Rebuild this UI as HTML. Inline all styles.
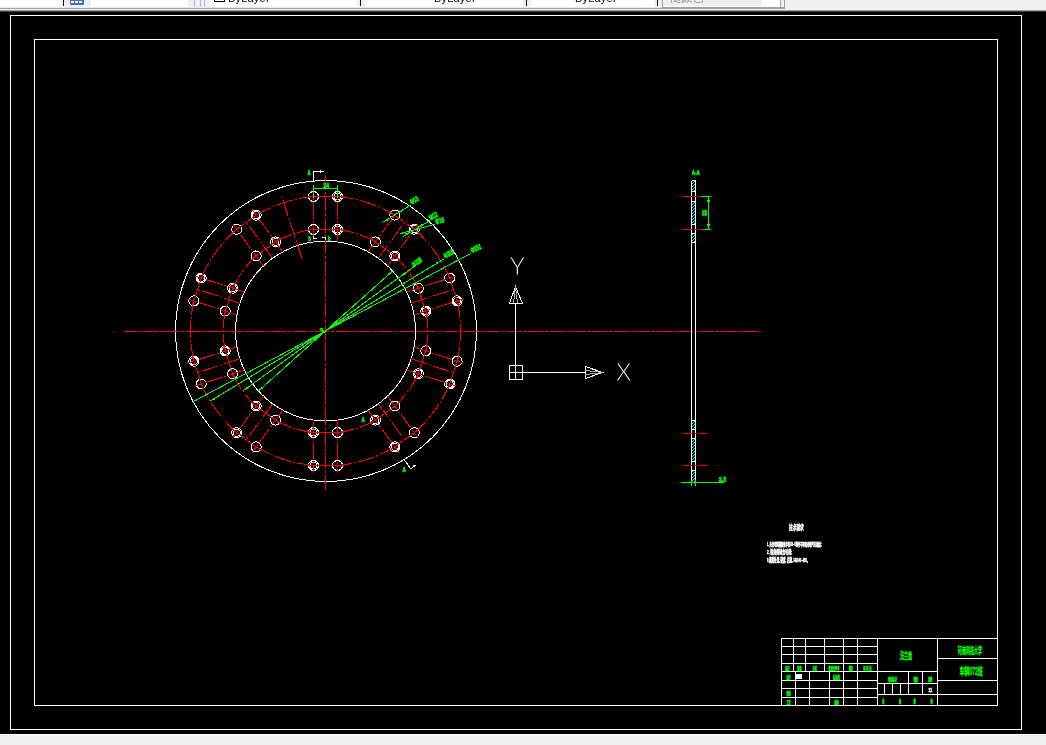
<!DOCTYPE html>
<html lang="zh"><head><meta charset="utf-8"><title>CAD - 顶轮盘</title>
<style>
html,body{margin:0;padding:0;background:#000;}
body{width:1046px;height:745px;overflow:hidden;position:relative;font-family:"Liberation Sans","Noto Sans CJK SC",sans-serif;}
#tb{will-change:transform;position:absolute;left:0;top:0;width:1046px;height:12px;background:#f0f0f0;overflow:hidden;}
#tb .bar{position:absolute;left:0;top:0;width:785px;height:9px;background:#fff;}
#tb div{position:absolute;}
#tb .gap{top:0;height:7px;background:#eef0f4;}
#tb .vl{top:0;height:6px;width:1px;background:#111;}
#tb .gl{top:0;height:7px;width:1px;background:#b4b8c0;}
#tb .txt{top:-9.5px;font-size:11px;line-height:14px;color:#000;white-space:nowrap;letter-spacing:0.2px}
#tb .l7{left:0;top:7px;width:662px;height:1px;background:#e3e9f2;}
#tb .l8{left:0;top:8px;width:785px;height:1px;background:#a0a0a0;}
#tb .l9{left:0;top:9px;width:1046px;height:1px;background:#f2f2f2;}
#tb .l10{left:0;top:10px;width:1046px;height:1px;background:#a0a0a0;}
#tb .l11{left:0;top:11px;width:1046px;height:1px;background:#3c3c3c;}
#bot{position:absolute;left:0;top:734px;width:1046px;height:11px;background:#f0f0f0;border-top:1px solid #fff;box-sizing:border-box;}
svg{position:absolute;left:0;top:0;will-change:transform;}
.w{stroke:#fff;stroke-width:1;fill:none;}
.w2{stroke:#fff;stroke-width:2;fill:none;}
.wthin{stroke:#aaa;stroke-width:1;fill:none;}
.wf{fill:#fff;stroke:none;}
.r{stroke:#f00;stroke-width:1;fill:none;}
.cl{stroke-dasharray:15 2 3 1.4;}
.bc{stroke-dasharray:17 2 2 2;}
.hl{stroke-dasharray:17 2 2 2;}
.g{stroke:#0f0;stroke-width:1;fill:none;}
.gf{fill:#0f0;stroke:none;}
text{font-family:"Liberation Sans","Noto Sans CJK SC",sans-serif;stroke:none;}
.gt{fill:#0f0;font-size:7.5px;font-weight:bold;stroke:#0f0;stroke-width:0.6px;}
.mid{text-anchor:middle;}
.ucs{fill:#fff;font-size:25px;text-anchor:middle;font-family:"Liberation Sans",sans-serif;stroke:#000;stroke-width:1.1px;}
.wt{fill:#fff;font-weight:bold;stroke:#fff;stroke-width:0.5px;}
.tg{fill:#0f0;font-weight:bold;stroke:#0f0;stroke-width:0.5px;}
.t5{font-size:5px}.t55{font-size:4.8px}.t56{font-size:5.6px}.t6{font-size:6px}.t7{font-size:7px}.t9{font-size:9px}.t10{font-size:10px}
</style></head>
<body>
<div id="tb">
  <div class="bar"></div>
  <div class="gap" style="left:60px;width:31px;background:#f0f0f0"></div>
  <div class="vl" style="left:63px"></div>
  <div style="left:70px;top:0;width:14px;height:5px;background:#4b6ea3;border-radius:0 0 1px 1px"></div>
  <div style="left:71px;top:1px;width:3px;height:2px;background:#e8eef8"></div>
  <div style="left:75px;top:1px;width:3px;height:2px;background:#e8eef8"></div>
  <div style="left:79px;top:1px;width:3px;height:2px;background:#e8eef8"></div>
  <div class="gap" style="left:188px;width:21px"></div>
  <div class="gl" style="left:194px"></div><div class="gl" style="left:200px"></div><div class="gl" style="left:204px"></div>
  <div style="left:214px;top:-9px;width:9px;height:9px;border:1px solid #000"></div>
  <div class="txt" style="left:228px">ByLayer</div>
  <div class="gap" style="left:357px;width:8px"></div><div class="vl" style="left:360px"></div>
  <div class="txt" style="left:434px">ByLayer</div>
  <div class="gap" style="left:523px;width:8px"></div><div class="vl" style="left:526px"></div>
  <div class="txt" style="left:575px">ByLayer</div>
  <div class="gap" style="left:654px;width:8px"></div><div class="vl" style="left:657px"></div>
  <div style="left:662px;top:0;width:1px;height:8px;background:#a0a0a0"></div>
  <div style="left:663px;top:0;width:99px;height:6px;background:#f0f0f0"></div>
  <div class="txt" style="left:670px;color:#8a8a8a;top:-9px">随颜色</div>
  <div style="left:662px;top:7px;width:123px;height:1px;background:#a0a0a0"></div>
  <div style="left:780px;top:0;width:1px;height:8px;background:#a0a0a0"></div>
  <div style="left:781px;top:0;width:3px;height:7px;background:#f0f0f0"></div>
  <div style="left:784px;top:0;width:1px;height:9px;background:#a0a0a0"></div>
  <div class="l7"></div><div class="l8"></div><div class="l9"></div><div class="l10"></div><div class="l11"></div>
</div>
<svg width="1046" height="745" viewBox="0 0 1046 745" shape-rendering="crispEdges">
<defs>
<pattern id="hat" width="3" height="3" patternUnits="userSpaceOnUse">
<rect width="3" height="3" fill="#000"/>
<path d="M-0.5,3.5 L3.5,-0.5" stroke="#0ff" stroke-width="1"/>
</pattern>
<clipPath id="cv"><rect x="0" y="12" width="1046" height="722"/></clipPath>
</defs>
<g clip-path="url(#cv)">
<rect x="10.5" y="15.5" width="1011" height="714" class="w"/>
<rect x="34.5" y="39.5" width="963" height="666" class="w"/>
<ellipse cx="326" cy="331" rx="150.5" ry="150.5" class="w"/>
<circle cx="325.5" cy="331" r="90" class="w"/>
<circle cx="313.5" cy="196.5" r="5" class="w"/>
<circle cx="337.5" cy="196.5" r="5" class="w"/>
<circle cx="337.5" cy="196.5" r="3.5" class="w"/>
<circle cx="313.5" cy="229.5" r="5" class="w"/>
<circle cx="337.5" cy="229.5" r="5" class="w"/>
<circle cx="337.5" cy="229.5" r="3.5" class="w"/>
<circle cx="394.85" cy="215.13" r="5" class="w"/>
<circle cx="414.27" cy="229.24" r="5" class="w"/>
<circle cx="414.27" cy="229.24" r="3.5" class="w"/>
<circle cx="375.45" cy="241.83" r="5" class="w"/>
<circle cx="394.87" cy="255.94" r="5" class="w"/>
<circle cx="394.87" cy="255.94" r="3.5" class="w"/>
<circle cx="449.71" cy="278.02" r="5" class="w"/>
<circle cx="457.13" cy="300.85" r="5" class="w"/>
<circle cx="457.13" cy="300.85" r="3.5" class="w"/>
<circle cx="418.32" cy="288.22" r="5" class="w"/>
<circle cx="425.74" cy="311.05" r="5" class="w"/>
<circle cx="425.74" cy="311.05" r="3.5" class="w"/>
<circle cx="457.13" cy="361.15" r="5" class="w"/>
<circle cx="449.71" cy="383.98" r="5" class="w"/>
<circle cx="449.71" cy="383.98" r="3.5" class="w"/>
<circle cx="425.74" cy="350.95" r="5" class="w"/>
<circle cx="418.32" cy="373.78" r="5" class="w"/>
<circle cx="418.32" cy="373.78" r="3.5" class="w"/>
<circle cx="414.27" cy="432.76" r="5" class="w"/>
<circle cx="394.85" cy="446.87" r="5" class="w"/>
<circle cx="394.85" cy="446.87" r="3.5" class="w"/>
<circle cx="394.87" cy="406.06" r="5" class="w"/>
<circle cx="375.45" cy="420.17" r="5" class="w"/>
<circle cx="375.45" cy="420.17" r="3.5" class="w"/>
<circle cx="337.5" cy="465.5" r="5" class="w"/>
<circle cx="313.5" cy="465.5" r="5" class="w"/>
<circle cx="313.5" cy="465.5" r="3.5" class="w"/>
<circle cx="337.5" cy="432.5" r="5" class="w"/>
<circle cx="313.5" cy="432.5" r="5" class="w"/>
<circle cx="313.5" cy="432.5" r="3.5" class="w"/>
<circle cx="256.15" cy="446.87" r="5" class="w"/>
<circle cx="236.73" cy="432.76" r="5" class="w"/>
<circle cx="236.73" cy="432.76" r="3.5" class="w"/>
<circle cx="275.55" cy="420.17" r="5" class="w"/>
<circle cx="256.13" cy="406.06" r="5" class="w"/>
<circle cx="256.13" cy="406.06" r="3.5" class="w"/>
<circle cx="201.29" cy="383.98" r="5" class="w"/>
<circle cx="193.87" cy="361.15" r="5" class="w"/>
<circle cx="193.87" cy="361.15" r="3.5" class="w"/>
<circle cx="232.68" cy="373.78" r="5" class="w"/>
<circle cx="225.26" cy="350.95" r="5" class="w"/>
<circle cx="225.26" cy="350.95" r="3.5" class="w"/>
<circle cx="193.87" cy="300.85" r="5" class="w"/>
<circle cx="201.29" cy="278.02" r="5" class="w"/>
<circle cx="201.29" cy="278.02" r="3.5" class="w"/>
<circle cx="225.26" cy="311.05" r="5" class="w"/>
<circle cx="232.68" cy="288.22" r="5" class="w"/>
<circle cx="232.68" cy="288.22" r="3.5" class="w"/>
<circle cx="236.73" cy="229.24" r="5" class="w"/>
<circle cx="256.15" cy="215.13" r="5" class="w"/>
<circle cx="256.15" cy="215.13" r="3.5" class="w"/>
<circle cx="256.13" cy="255.94" r="5" class="w"/>
<circle cx="275.55" cy="241.83" r="5" class="w"/>
<circle cx="275.55" cy="241.83" r="3.5" class="w"/>
<line x1="313.5" y1="241.5" x2="337.5" y2="241.5" class="w"/>
<line x1="124" y1="331.5" x2="761" y2="331.5" class="r cl" stroke-dashoffset="2.5"/>
<line x1="325.5" y1="175" x2="325.5" y2="490" class="r cl"/>
<path d="M337.5,196.5 A135.03,135.03 0 0 1 394.85,215.13" class="r bc"/>
<path d="M414.27,229.24 A135.03,135.03 0 0 1 449.71,278.02" class="r bc"/>
<path d="M457.13,300.85 A135.03,135.03 0 0 1 457.13,361.15" class="r bc"/>
<path d="M449.71,383.98 A135.03,135.03 0 0 1 414.27,432.76" class="r bc"/>
<path d="M394.85,446.87 A135.03,135.03 0 0 1 337.5,465.5" class="r bc"/>
<path d="M313.5,465.5 A135.03,135.03 0 0 1 256.15,446.87" class="r bc"/>
<path d="M236.73,432.76 A135.03,135.03 0 0 1 201.29,383.98" class="r bc"/>
<path d="M193.87,361.15 A135.03,135.03 0 0 1 193.87,300.85" class="r bc"/>
<path d="M201.29,278.02 A135.03,135.03 0 0 1 236.73,229.24" class="r bc"/>
<path d="M256.15,215.13 A135.03,135.03 0 0 1 313.5,196.5" class="r bc"/>
<path d="M337.5,229.5 A102.21,102.21 0 0 1 375.45,241.83" class="r bc"/>
<path d="M394.87,255.94 A102.21,102.21 0 0 1 418.32,288.22" class="r bc"/>
<path d="M425.74,311.05 A102.21,102.21 0 0 1 425.74,350.95" class="r bc"/>
<path d="M418.32,373.78 A102.21,102.21 0 0 1 394.87,406.06" class="r bc"/>
<path d="M375.45,420.17 A102.21,102.21 0 0 1 337.5,432.5" class="r bc"/>
<path d="M313.5,432.5 A102.21,102.21 0 0 1 275.55,420.17" class="r bc"/>
<path d="M256.13,406.06 A102.21,102.21 0 0 1 232.68,373.78" class="r bc"/>
<path d="M225.26,350.95 A102.21,102.21 0 0 1 225.26,311.05" class="r bc"/>
<path d="M232.68,288.22 A102.21,102.21 0 0 1 256.13,255.94" class="r bc"/>
<path d="M275.55,241.83 A102.21,102.21 0 0 1 313.5,229.5" class="r bc"/>
<line x1="313.5" y1="241.8" x2="313.5" y2="189.5" class="r hl"/>
<line x1="337.5" y1="241.8" x2="337.5" y2="189.5" class="r hl"/>
<line x1="307.5" y1="196.5" x2="343.5" y2="196.5" class="r"/>
<line x1="307.5" y1="229.5" x2="343.5" y2="229.5" class="r"/>
<line x1="368.22" y1="251.79" x2="398.96" y2="209.47" class="r hl"/>
<line x1="387.64" y1="265.89" x2="418.38" y2="223.58" class="r hl"/>
<line x1="378.4" y1="258.19" x2="404.97" y2="221.62" class="r hl"/>
<line x1="389.99" y1="211.61" x2="419.12" y2="232.77" class="r"/>
<line x1="370.6" y1="238.3" x2="399.72" y2="259.46" class="r"/>
<line x1="406.62" y1="292.02" x2="456.37" y2="275.86" class="r hl"/>
<line x1="414.04" y1="314.85" x2="463.78" y2="298.69" class="r hl"/>
<line x1="411.1" y1="303.19" x2="454.08" y2="289.22" class="r hl"/>
<line x1="447.85" y1="272.32" x2="458.98" y2="306.56" class="r"/>
<line x1="416.47" y1="282.52" x2="427.59" y2="316.75" class="r"/>
<line x1="414.04" y1="347.15" x2="463.78" y2="363.31" class="r hl"/>
<line x1="406.62" y1="369.98" x2="456.37" y2="386.14" class="r hl"/>
<line x1="411.1" y1="358.81" x2="454.08" y2="372.78" class="r hl"/>
<line x1="458.98" y1="355.44" x2="447.85" y2="389.68" class="r"/>
<line x1="427.59" y1="345.25" x2="416.47" y2="379.48" class="r"/>
<line x1="387.64" y1="396.11" x2="418.38" y2="438.42" class="r hl"/>
<line x1="368.22" y1="410.21" x2="398.96" y2="452.53" class="r hl"/>
<line x1="378.4" y1="403.81" x2="404.97" y2="440.38" class="r hl"/>
<line x1="419.12" y1="429.23" x2="389.99" y2="450.39" class="r"/>
<line x1="399.72" y1="402.54" x2="370.6" y2="423.7" class="r"/>
<line x1="337.5" y1="420.2" x2="337.5" y2="472.5" class="r hl"/>
<line x1="313.5" y1="420.2" x2="313.5" y2="472.5" class="r hl"/>
<line x1="343.5" y1="465.5" x2="307.5" y2="465.5" class="r"/>
<line x1="343.5" y1="432.5" x2="307.5" y2="432.5" class="r"/>
<line x1="282.78" y1="410.21" x2="252.04" y2="452.53" class="r hl"/>
<line x1="263.36" y1="396.11" x2="232.62" y2="438.42" class="r hl"/>
<line x1="272.6" y1="403.81" x2="246.03" y2="440.38" class="r hl"/>
<line x1="261.01" y1="450.39" x2="231.88" y2="429.23" class="r"/>
<line x1="280.4" y1="423.7" x2="251.28" y2="402.54" class="r"/>
<line x1="244.38" y1="369.98" x2="194.63" y2="386.14" class="r hl"/>
<line x1="236.96" y1="347.15" x2="187.22" y2="363.31" class="r hl"/>
<line x1="239.9" y1="358.81" x2="196.92" y2="372.78" class="r hl"/>
<line x1="203.15" y1="389.68" x2="192.02" y2="355.44" class="r"/>
<line x1="234.53" y1="379.48" x2="223.41" y2="345.25" class="r"/>
<line x1="236.96" y1="314.85" x2="187.22" y2="298.69" class="r hl"/>
<line x1="244.38" y1="292.02" x2="194.63" y2="275.86" class="r hl"/>
<line x1="239.9" y1="303.19" x2="196.92" y2="289.22" class="r hl"/>
<line x1="192.02" y1="306.56" x2="203.15" y2="272.32" class="r"/>
<line x1="223.41" y1="316.75" x2="234.53" y2="282.52" class="r"/>
<line x1="263.36" y1="265.89" x2="232.62" y2="223.58" class="r hl"/>
<line x1="282.78" y1="251.79" x2="252.04" y2="209.47" class="r hl"/>
<line x1="272.6" y1="258.19" x2="246.03" y2="221.62" class="r hl"/>
<line x1="231.88" y1="232.77" x2="261.01" y2="211.61" class="r"/>
<line x1="251.28" y1="259.46" x2="280.4" y2="238.3" class="r"/>
<line x1="302.32" y1="259.67" x2="281" y2="194.05" class="r hl"/>
<line x1="193.18" y1="401.65" x2="471.05" y2="253.28" class="g"/>
<polygon points="457.82,260.35 453.88,263.59 452.94,261.82" class="gf"/>
<polygon points="193.18,401.65 197.12,398.41 198.06,400.18" class="gf"/>
<text transform="translate(472.22 253.34) rotate(-28.1) scale(0.58 1)" class="gt">Φ352</text>
<line x1="209.98" y1="401.24" x2="444.27" y2="258.79" class="g"/>
<polygon points="441.02,260.76 437.27,264.21 436.23,262.5" class="gf"/>
<polygon points="209.98,401.24 213.73,397.79 214.77,399.5" class="gf"/>
<text transform="translate(445.44 258.78) rotate(-31.3) scale(0.58 1)" class="gt">Φ318</text>
<line x1="243.22" y1="390.78" x2="416.11" y2="265.17" class="g"/>
<polygon points="407.78,271.22 404.32,274.97 403.14,273.35" class="gf"/>
<polygon points="243.22,390.78 246.68,387.03 247.86,388.65" class="gf"/>
<text transform="translate(414.04 267.42) rotate(-36) scale(0.58 1)" class="gt">Φ238</text>
<line x1="258.41" y1="390.99" x2="392.59" y2="271.01" class="g"/>
<polygon points="392.59,271.01 389.53,275.09 388.2,273.6" class="gf"/>
<polygon points="258.41,390.99 261.47,386.91 262.8,388.4" class="gf"/>
<text transform="translate(322.5 333.5) rotate(-35) scale(0.6 1)" class="gt">R</text>
<line x1="382.3" y1="222.6" x2="410.9" y2="204.9" class="g"/>
<text transform="translate(411.75 204.77) rotate(-31.75) scale(0.62 1)" class="gt">Φ13</text>
<line x1="403.2" y1="236.6" x2="429.8" y2="220.6" class="g"/>
<text transform="translate(430.66 220.48) rotate(-31.03) scale(0.62 1)" class="gt">M12</text>
<line x1="400" y1="233.7" x2="435" y2="224.2" class="g"/>
<text transform="translate(435.97 224.34) rotate(-15.19) scale(0.62 1)" class="gt">Φ10</text>
<polygon points="390.75,217.63 387.03,221.12 385.97,219.42" class="gf"/>
<polygon points="398.95,212.63 402.67,209.15 403.73,210.85" class="gf"/>
<polygon points="410.17,231.74 406.5,235.34 405.26,233.29" class="gf"/>
<polygon points="418.37,226.74 422.03,223.14 423.27,225.19" class="gf"/>
<line x1="313.5" y1="185" x2="313.5" y2="198" class="g"/>
<line x1="337.5" y1="185" x2="337.5" y2="198" class="g"/>
<line x1="313.5" y1="188.5" x2="337.5" y2="188.5" class="g"/>
<polygon points="314,188.5 318,187.5 318,189.5" class="gf"/>
<polygon points="337,188.5 333,189.5 333,187.5" class="gf"/>
<text transform="translate(326.2 187.8) scale(0.7 1)" class="gt mid">24</text>
<polyline points="313.5,181 313.5,171.5 323.5,171.5" class="w"/>
<polygon points="317.5,171.5 320.5,170.1 320.5,172.9" class="wf"/>
<text transform="translate(307.6 175.3) scale(0.6 1)" class="gt">A</text>
<polyline points="404.14,459.65 410.72,468.71 416.38,464.6" class="w"/>
<polygon points="416.38,464.6 414.31,467.7 412.79,465.6" class="wf"/>
<text transform="translate(402.4 472.3) scale(0.6 1)" class="gt">A</text>
<text transform="translate(361.6 421.6) scale(0.6 1)" class="gt">A</text>
<polyline points="313.5,236 313.5,238.5 317,238.5" class="w"/>
<polyline points="322,237 325.5,237 325.5,240" class="w"/>
<text transform="translate(308.6 241.2) scale(0.6 1)" class="gt">b</text>
<text transform="translate(327.8 240.6) scale(0.6 1)" class="gt">b</text>
<rect x="509.5" y="365.5" width="13" height="14" class="w"/>
<line x1="509.5" y1="372.5" x2="522.5" y2="372.5" class="w"/>
<line x1="515.5" y1="365.5" x2="515.5" y2="379.5" class="w"/>
<line x1="515.5" y1="365.5" x2="515.5" y2="303.5" class="w"/>
<line x1="522.5" y1="372.5" x2="585.5" y2="372.5" class="w"/>
<polygon points="509.5,303.5 522.5,303.5 515.5,286.5" class="w"/>
<polyline points="513.5,303.5 515.5,286.5 517.5,303.5" class="wthin"/>
<polygon points="585.5,366.5 585.5,378.5 602.5,372.5" class="w"/>
<polyline points="585.5,370.5 602.5,372.5 585.5,374.5" class="wthin"/>
<text transform="translate(517.4 274.6)" class="ucs">Y</text>
<text transform="translate(623.6 381.4)" class="ucs">X</text>
<line x1="691.5" y1="180.5" x2="691.5" y2="482.5" class="w"/>
<line x1="695.5" y1="180.5" x2="695.5" y2="482.5" class="w"/>
<line x1="691.5" y1="180.5" x2="695.5" y2="180.5" class="w"/>
<line x1="691.5" y1="482.5" x2="695.5" y2="482.5" class="w"/>
<rect x="692" y="180.5" width="3" height="11" fill="url(#hat)" stroke="none"/>
<line x1="691.5" y1="180.5" x2="695.5" y2="180.5" class="w"/>
<line x1="691.5" y1="191.5" x2="695.5" y2="191.5" class="w"/>
<rect x="692" y="201.5" width="3" height="23" fill="url(#hat)" stroke="none"/>
<line x1="691.5" y1="201.5" x2="695.5" y2="201.5" class="w"/>
<line x1="691.5" y1="224.5" x2="695.5" y2="224.5" class="w"/>
<rect x="692" y="233.5" width="3" height="9" fill="url(#hat)" stroke="none"/>
<line x1="691.5" y1="233.5" x2="695.5" y2="233.5" class="w"/>
<line x1="691.5" y1="242.5" x2="695.5" y2="242.5" class="w"/>
<rect x="692" y="420.5" width="3" height="9" fill="url(#hat)" stroke="none"/>
<line x1="691.5" y1="420.5" x2="695.5" y2="420.5" class="w"/>
<line x1="691.5" y1="429.5" x2="695.5" y2="429.5" class="w"/>
<rect x="692" y="438.5" width="3" height="23" fill="url(#hat)" stroke="none"/>
<line x1="691.5" y1="438.5" x2="695.5" y2="438.5" class="w"/>
<line x1="691.5" y1="461.5" x2="695.5" y2="461.5" class="w"/>
<rect x="692" y="470.5" width="3" height="12" fill="url(#hat)" stroke="none"/>
<line x1="691.5" y1="470.5" x2="695.5" y2="470.5" class="w"/>
<line x1="691.5" y1="482.5" x2="695.5" y2="482.5" class="w"/>
<line x1="683" y1="196.5" x2="701" y2="196.5" class="r" stroke-dasharray="9 2 3 2"/>
<line x1="683" y1="229.5" x2="703" y2="229.5" class="r" stroke-dasharray="9 2 3 2"/>
<line x1="683" y1="433.5" x2="707" y2="433.5" class="r" stroke-dasharray="9 2 3 2"/>
<line x1="683" y1="465.5" x2="708" y2="465.5" class="r" stroke-dasharray="9 2 3 2"/>
<line x1="701" y1="196.5" x2="711" y2="196.5" class="g"/>
<line x1="703" y1="229.5" x2="711" y2="229.5" class="g"/>
<line x1="708.5" y1="196.5" x2="708.5" y2="229.5" class="g"/>
<polygon points="708.5,197 710.1,202 706.9,202" class="gf"/>
<polygon points="708.5,229 706.9,224 710.1,224" class="gf"/>
<text transform="translate(707.2 213) rotate(-90) scale(0.7 1)" class="gt mid">33</text>
<text transform="translate(695.7 175.4) scale(0.6 1)" class="gt mid">A-A</text>
<line x1="681" y1="482.5" x2="724" y2="482.5" class="g"/>
<line x1="691.5" y1="480" x2="691.5" y2="486" class="g"/>
<line x1="695.5" y1="480" x2="695.5" y2="486" class="g"/>
<polygon points="691,482.5 687,483.5 687,481.5" class="gf"/>
<polygon points="696,482.5 700,481.5 700,483.5" class="gf"/>
<text transform="translate(718.8 481.8) scale(0.7 1)" class="gt">3.5</text>
<text transform="translate(789 530.4) scale(0.53 1)" class="wt t7">技术要求</text>
<text transform="translate(767 546) scale(0.46 1)" class="wt t5">1. 未注明铸造圆角半径R3~5铸件不得有砂眼气孔缩松;</text>
<text transform="translate(767 554.2) scale(0.5 1)" class="wt t6">2. 锐角倒钝去毛刺;</text>
<text transform="translate(767 561.8) scale(0.45 1)" class="wt t56">3.调质处理, 硬度, 达到, HB240~280。</text>
<rect x="781.5" y="638.5" width="216.0" height="67.0" class="w"/>
<line x1="781.5" y1="646.5" x2="877.5" y2="646.5" class="w"/>
<line x1="781.5" y1="654.5" x2="877.5" y2="654.5" class="w"/>
<line x1="781.5" y1="663.5" x2="877.5" y2="663.5" class="w"/>
<line x1="781.5" y1="671.5" x2="877.5" y2="671.5" class="w"/>
<line x1="781.5" y1="680.5" x2="877.5" y2="680.5" class="w"/>
<line x1="781.5" y1="688.5" x2="877.5" y2="688.5" class="w"/>
<line x1="781.5" y1="697.5" x2="877.5" y2="697.5" class="w"/>
<line x1="793.5" y1="638.5" x2="793.5" y2="671.5" class="w"/>
<line x1="805.5" y1="638.5" x2="805.5" y2="671.5" class="w"/>
<line x1="824.5" y1="638.5" x2="824.5" y2="671.5" class="w"/>
<line x1="843.5" y1="638.5" x2="843.5" y2="671.5" class="w"/>
<line x1="857.5" y1="638.5" x2="857.5" y2="671.5" class="w"/>
<line x1="795.5" y1="671.5" x2="795.5" y2="705.5" class="w"/>
<line x1="809.5" y1="671.5" x2="809.5" y2="705.5" class="w"/>
<line x1="829.5" y1="671.5" x2="829.5" y2="705.5" class="w"/>
<line x1="843.5" y1="671.5" x2="843.5" y2="705.5" class="w"/>
<line x1="857.5" y1="671.5" x2="857.5" y2="705.5" class="w"/>
<line x1="877.5" y1="638.5" x2="877.5" y2="705.5" class="w"/>
<line x1="937.5" y1="638.5" x2="937.5" y2="705.5" class="w"/>
<line x1="877.5" y1="671.5" x2="937.5" y2="671.5" class="w"/>
<line x1="877.5" y1="683.5" x2="937.5" y2="683.5" class="w"/>
<line x1="877.5" y1="694.5" x2="997.5" y2="694.5" class="w"/>
<line x1="937.5" y1="658.5" x2="997.5" y2="658.5" class="w"/>
<line x1="937.5" y1="680.5" x2="997.5" y2="680.5" class="w"/>
<line x1="908.5" y1="671.5" x2="908.5" y2="694.5" class="w"/>
<line x1="922.5" y1="671.5" x2="922.5" y2="694.5" class="w"/>
<line x1="884.5" y1="683.5" x2="884.5" y2="694.5" class="w"/>
<line x1="892.5" y1="683.5" x2="892.5" y2="694.5" class="w"/>
<line x1="900.5" y1="683.5" x2="900.5" y2="694.5" class="w"/>
<text transform="translate(787.3 670.1) scale(0.45 1)" class="tg t55 mid">标记</text>
<text transform="translate(799.4 670.1) scale(0.45 1)" class="tg t55 mid">处数</text>
<text transform="translate(814.7 670.1) scale(0.45 1)" class="tg t55 mid">分区</text>
<text transform="translate(834 670.1) scale(0.45 1)" class="tg t55 mid">更改文件号</text>
<text transform="translate(850.8 670.1) scale(0.45 1)" class="tg t55 mid">签名</text>
<text transform="translate(867.5 670.1) scale(0.5 1)" class="tg t55 mid">年 月 日</text>
<text transform="translate(788.6 678.9) scale(0.45 1)" class="tg t55 mid">设计</text>
<rect x="796" y="674" width="6" height="5" fill="#fff" stroke="none"/>
<text transform="translate(836.6 678.9) scale(0.45 1)" class="tg t55 mid">标准化</text>
<text transform="translate(788.6 695.3) scale(0.45 1)" class="tg t55 mid">审核</text>
<text transform="translate(788.6 703.5) scale(0.45 1)" class="tg t55 mid">工艺</text>
<text transform="translate(836.6 703.5) scale(0.45 1)" class="tg t55 mid">批准</text>
<text transform="translate(906 659.3) scale(0.45 1)" class="tg t9 mid">法兰盘</text>
<text transform="translate(970 654.2) scale(0.45 1)" class="tg t9 mid">河南科技大学</text>
<text transform="translate(971.2 675) scale(0.5 1)" class="tg t10 mid">车辆072班</text>
<text transform="translate(892.6 681.2) scale(0.45 1)" class="tg t55 mid">阶段标记</text>
<text transform="translate(915.6 681.2) scale(0.45 1)" class="tg t55 mid">重量</text>
<text transform="translate(930.1 681.2) scale(0.45 1)" class="tg t55 mid">比例</text>
<text transform="translate(930.3 692.2) scale(0.62 1)" class="wt t56 mid">11</text>
<text transform="translate(883.3 703.2) scale(0.45 1)" class="tg t55 mid">共</text>
<text transform="translate(900.1 703.2) scale(0.45 1)" class="tg t55 mid">张</text>
<text transform="translate(914.6 703.2) scale(0.45 1)" class="tg t55 mid">第</text>
<text transform="translate(931.5 703.2) scale(0.45 1)" class="tg t55 mid">张</text>
</g>
</svg>
<div id="bot"></div>
</body></html>
